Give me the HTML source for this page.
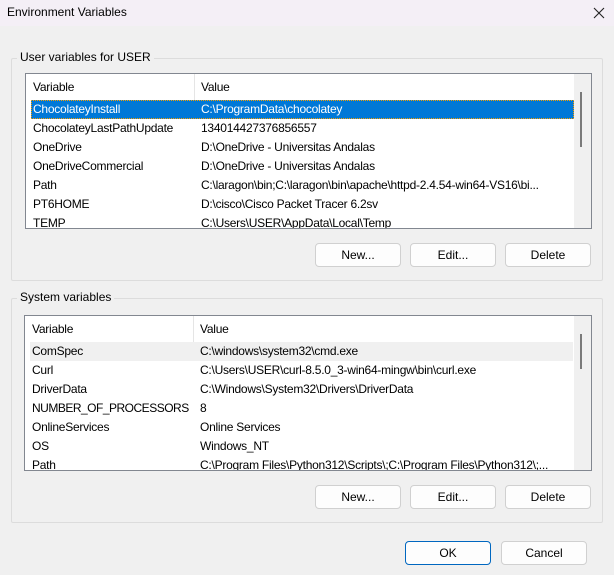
<!DOCTYPE html>
<html><head><style>
*{margin:0;padding:0;box-sizing:border-box}
body{width:614px;height:575px;background:#f0f0f0;font-family:"Liberation Sans",sans-serif;font-size:12px;color:#000;position:relative;overflow:hidden}
.title{position:absolute;left:0;top:0;width:614px;height:26px;background:#f4eff6}
.title span{position:absolute;left:7px;top:5px;font-size:12px}
.abs{position:absolute}
.group{position:absolute;border:1px solid #dcdcdc;border-radius:2px}
.glabel{position:absolute;background:#f0f0f0;padding:0 3px;font-size:12px}
.list{position:absolute;background:#fff;border:1px solid #828790;overflow:hidden;letter-spacing:-0.25px}
.row{position:absolute;left:5px;height:19px;width:543px;line-height:19px;white-space:nowrap}
.row .a{position:absolute;left:2px}
.row .b{position:absolute;left:170px}
.hdr{position:absolute;left:0;top:0;height:26px;width:550px;line-height:26px}
.hdr .a{position:absolute;left:7px}
.hdr .b{position:absolute;left:175px}
.hdr .d{position:absolute;left:168px;top:0;width:1px;height:26px;background:#e5e5e5}
.sb{position:absolute;right:0;top:0;width:17px;bottom:0;background:#f0f0f0}
.sb i{position:absolute;left:6px;width:2px;background:#7a7a7a}
.btn{position:absolute;height:24px;width:86px;background:#fdfdfd;border:1px solid #d0d0d0;border-radius:4px;text-align:center;line-height:22px;font-size:12px}
</style></head><body>
<div class="title"><span>Environment Variables</span>
<svg class="abs" style="left:593px;top:7px" width="12" height="12"><path d="M1 1L11 11M11 1L1 11" stroke="#222" stroke-width="1.1"/></svg></div>

<div class="group" style="left:11px;top:58px;width:592px;height:223px"></div>
<div class="glabel" style="left:17px;top:50px">User variables for USER</div>
<div class="list" style="left:25px;top:73px;width:567px;height:156px">
 <div class="hdr"><span class="a">Variable</span><span class="d"></span><span class="b">Value</span></div>
 <div class="row" style="top:26px;background:#0078d7;color:#fff;outline:1px dotted #f9a000;outline-offset:-1px"><span class="a">ChocolateyInstall</span><span class="b">C:\ProgramData\chocolatey</span></div>
 <div class="row" style="top:45px"><span class="a">ChocolateyLastPathUpdate</span><span class="b">134014427376856557</span></div>
 <div class="row" style="top:64px"><span class="a">OneDrive</span><span class="b">D:\OneDrive - Universitas Andalas</span></div>
 <div class="row" style="top:83px"><span class="a">OneDriveCommercial</span><span class="b">D:\OneDrive - Universitas Andalas</span></div>
 <div class="row" style="top:102px"><span class="a">Path</span><span class="b">C:\laragon\bin;C:\laragon\bin\apache\httpd-2.4.54-win64-VS16\bi...</span></div>
 <div class="row" style="top:121px"><span class="a">PT6HOME</span><span class="b">D:\cisco\Cisco Packet Tracer 6.2sv</span></div>
 <div class="row" style="top:140px"><span class="a">TEMP</span><span class="b">C:\Users\USER\AppData\Local\Temp</span></div>
 <div class="sb"><i style="top:18px;height:55px"></i></div>
</div>
<div class="btn" style="left:315px;top:243px">New...</div>
<div class="btn" style="left:410px;top:243px">Edit...</div>
<div class="btn" style="left:505px;top:243px">Delete</div>

<div class="group" style="left:11px;top:298px;width:592px;height:225px"></div>
<div class="glabel" style="left:17px;top:290px">System variables</div>
<div class="list" style="left:24px;top:315px;width:568px;height:156px">
 <div class="hdr"><span class="a">Variable</span><span class="d"></span><span class="b">Value</span></div>
 <div class="row" style="top:26px;background:#f0f0f0"><span class="a">ComSpec</span><span class="b">C:\windows\system32\cmd.exe</span></div>
 <div class="row" style="top:45px"><span class="a">Curl</span><span class="b">C:\Users\USER\curl-8.5.0_3-win64-mingw\bin\curl.exe</span></div>
 <div class="row" style="top:64px"><span class="a">DriverData</span><span class="b">C:\Windows\System32\Drivers\DriverData</span></div>
 <div class="row" style="top:83px"><span class="a" style="letter-spacing:-0.5px">NUMBER_OF_PROCESSORS</span><span class="b">8</span></div>
 <div class="row" style="top:102px"><span class="a">OnlineServices</span><span class="b">Online Services</span></div>
 <div class="row" style="top:121px"><span class="a">OS</span><span class="b">Windows_NT</span></div>
 <div class="row" style="top:140px"><span class="a">Path</span><span class="b">C:\Program Files\Python312\Scripts\;C:\Program Files\Python312\;...</span></div>
 <div class="sb"><i style="top:18px;height:35px"></i></div>
</div>
<div class="btn" style="left:315px;top:485px">New...</div>
<div class="btn" style="left:410px;top:485px">Edit...</div>
<div class="btn" style="left:505px;top:485px">Delete</div>

<div class="btn" style="left:405px;top:541px;border:1px solid #0067c0">OK</div>
<div class="btn" style="left:501px;top:541px">Cancel</div>
</body></html>
